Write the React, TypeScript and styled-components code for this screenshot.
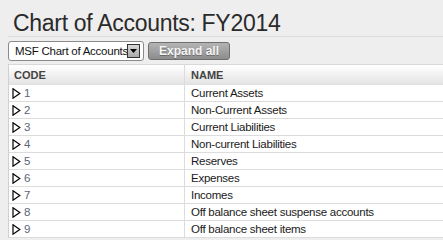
import React from "react";
import styled, { createGlobalStyle } from "styled-components";

const GlobalStyle = createGlobalStyle`
  html, body {
    margin: 0;
    padding: 0;
    background: #efeeee;
    font-family: "Liberation Sans", Arial, sans-serif;
    overflow: hidden;
  }
`;

const Page = styled.div`
  width: 443px;
  height: 240px;
  padding: 0 0 0 8px;
  box-sizing: border-box;
`;

const Title = styled.h1`
  margin: 0;
  padding: 10px 0 0 5px;
  height: 37px;
  box-sizing: border-box;
  font-size: 23px;
  letter-spacing: -0.3px;
  font-weight: normal;
  line-height: 27px;
  color: #2a2a2a;
  border-bottom: 1px solid #dcdcdc;
`;

const Toolbar = styled.div`
  display: flex;
  align-items: center;
  gap: 4px;
  height: 27px;
  box-sizing: border-box;
`;

const Select = styled.div`
  display: flex;
  align-items: center;
  justify-content: space-between;
  width: 136px;
  height: 20px;
  box-sizing: border-box;
  padding: 0 3px 0 6px;
  background: #fff;
  border: 1px solid #8a8a8a;
  border-radius: 3px;
  font-size: 11.5px;
  letter-spacing: -0.25px;
  color: #111;
  white-space: nowrap;
  overflow: hidden;
`;

const SelectLabel = styled.span`
  overflow: hidden;
`;

const SelectArrow = styled.span`
  flex: none;
  display: flex;
  align-items: center;
  justify-content: center;
  width: 13px;
  height: 14px;
  box-sizing: border-box;
  border: 1px solid #333;
  background: linear-gradient(#d8d8d8, #a8a8a8);
`;

const Button = styled.button`
  width: 82px;
  height: 18px;
  padding: 0;
  margin-top: 1px;
  border: 1px solid #6f6f6f;
  border-radius: 3px;
  background: linear-gradient(#b4b4b4, #8c8c8c);
  color: #f4f4f4;
  font-family: "Liberation Sans", Arial, sans-serif;
  font-size: 12px;
  font-weight: bold;
  text-shadow: 0 1px 0 #6a6a6a;
`;

const Table = styled.div`
  display: grid;
  grid-template-columns: 176px 1fr;
  background: #fff;
  border-left: 1px solid #d0d0d0;
`;

const HeadCell = styled.div<{ $first?: boolean }>`
  height: 21px;
  box-sizing: border-box;
  display: flex;
  align-items: center;
  padding-left: ${(p) => (p.$first ? "5px" : "6px")};
  padding-top: 1px;
  border-top: 1px solid #d8d8d8;
  border-bottom: 1px solid #e0e0e0;
  border-right: ${(p) => (p.$first ? "1px solid #dcdcdc" : "none")};
  background: linear-gradient(#ffffff, #e4e4e4);
  font-size: 11px;
  font-weight: bold;
  color: #444;
`;

const Cell = styled.div<{ $first?: boolean }>`
  height: 17px;
  box-sizing: border-box;
  display: flex;
  align-items: center;
  gap: 3px;
  padding-left: ${(p) => (p.$first ? "3px" : "6px")};
  border-bottom: 1px solid #dcdcdc;
  border-right: ${(p) => (p.$first ? "1px solid #dcdcdc" : "none")};
  font-size: 11.5px;
  letter-spacing: -0.25px;
  color: ${(p) => (p.$first ? "#5b6577" : "#1a1a1a")};
  white-space: nowrap;
`;

const Toggle = () => (
  <svg width="9" height="11" viewBox="0 0 9 11">
    <path d="M1 0.8 L7.8 5.5 L1 10.2 Z" fill="none" stroke="#000" strokeWidth="1.2" />
  </svg>
);

const accounts: [string, string][] = [
  ["1", "Current Assets"],
  ["2", "Non-Current Assets"],
  ["3", "Current Liabilities"],
  ["4", "Non-current Liabilities"],
  ["5", "Reserves"],
  ["6", "Expenses"],
  ["7", "Incomes"],
  ["8", "Off balance sheet suspense accounts"],
  ["9", "Off balance sheet items"],
];

export default function App() {
  return (
    <Page>
      <GlobalStyle />
      <Title>Chart of Accounts: FY2014</Title>
      <Toolbar>
        <Select>
          <SelectLabel>MSF Chart of Accounts</SelectLabel>
          <SelectArrow>
            <svg width="7" height="4" viewBox="0 0 7 4">
              <path d="M0 0 H7 L3.5 4 Z" fill="#000" />
            </svg>
          </SelectArrow>
        </Select>
        <Button>Expand all</Button>
      </Toolbar>
      <Table>
        <HeadCell $first>CODE</HeadCell>
        <HeadCell>NAME</HeadCell>
        {accounts.map(([code, name]) => (
          <React.Fragment key={code}>
            <Cell $first>
              <Toggle />
              {code}
            </Cell>
            <Cell>{name}</Cell>
          </React.Fragment>
        ))}
      </Table>
    </Page>
  );
}
